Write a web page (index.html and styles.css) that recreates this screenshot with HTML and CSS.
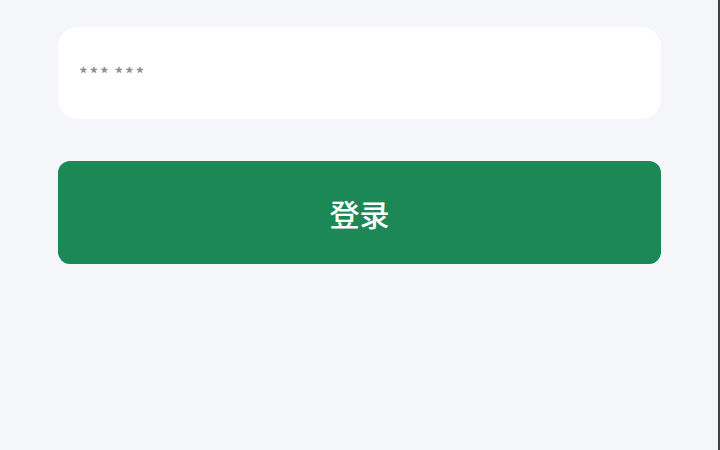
FILE: index.html
```html
<!DOCTYPE html>
<html lang="zh-CN">
<head>
<meta charset="utf-8">
<title>登录</title>
<link rel="stylesheet" href="styles.css">
</head>
<body>
<main class="page">
  <form class="login-form">
    <input class="field" type="password" placeholder="*** ***">
    <button class="submit" type="button">登录</button>
  </form>
</main>
</body>
</html>
```

FILE: styles.css
```css
html {
  margin: 0;
  padding: 0;
  height: 100%;
  background: #404040;
}
body {
  margin: 0 2px 0 0;
  padding: 0;
  height: 100%;
  background: #f5f6fa;
  font-family: "Noto Sans CJK SC", "Noto Sans", sans-serif;
}
.page {
  padding: 27px 0 0 58px;
}
.login-form {
  width: 603px;
  display: flex;
  flex-direction: column;
  gap: 42px;
}
.field {
  box-sizing: border-box;
  height: 92px;
  border: none;
  border-radius: 20px;
  background: #ffffff;
  padding: 0 21px;
  font-family: "Noto Sans CJK SC", sans-serif;
  font-size: 18px;
  font-weight: 500;
  color: #333;
  outline: none;
}
.field::placeholder {
  color: #8a8a8a;
  letter-spacing: 1.8px;
  word-spacing: -2px;
}
.submit {
  height: 103px;
  border: none;
  border-radius: 12px;
  background: #1b8855;
  color: #ffffff;
  font-family: "Noto Sans CJK SC", sans-serif;
  font-size: 30px;
  font-weight: 500;
  padding: 0;
}
```
